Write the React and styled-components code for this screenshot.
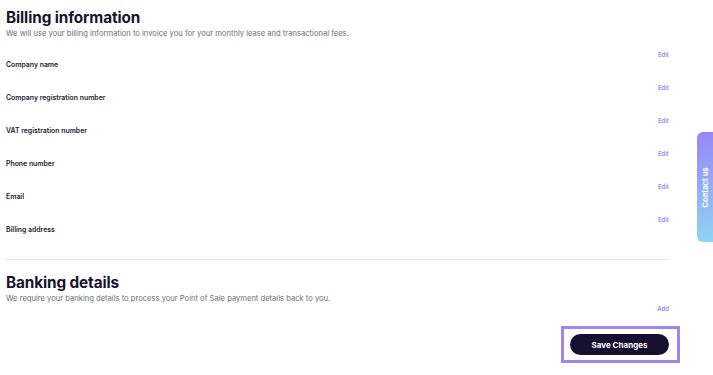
import React from "react";
import styled, { createGlobalStyle } from "styled-components";

const Global = createGlobalStyle`
  html, body { margin: 0; padding: 0; background: #ffffff; }
  body { font-family: Inter, "Noto Sans", "Liberation Sans", sans-serif; }
  * { box-sizing: border-box; }
`;

const Page = styled.div`
  width: 713px;
  height: 375px;
  overflow: hidden;
  padding: 8px 44px 0 6px;
  display: flex;
  flex-direction: column;
`;

const Title = styled.h1`
  margin: 0;
  font-size: 15.3px;
  line-height: 20px;
  font-weight: 700;
  color: #16132f;
  letter-spacing: -0.1px;
`;

const Subtitle = styled.p`
  margin: 0;
  font-size: 7.6px;
  line-height: 11px;
  color: #6e6c7c;
`;

const Rows = styled.div`
  margin-top: 12px;
  display: flex;
  flex-direction: column;
`;

const Row = styled.div`
  height: 33px;
  display: flex;
  flex-direction: column;
`;

const ActionLink = styled.a`
  align-self: flex-end;
  font-size: 6px;
  line-height: 8px;
  font-weight: 600;
  color: #9d88f4;
  cursor: pointer;
`;

const Label = styled.div`
  margin-top: 1px;
  font-size: 6.9px;
  line-height: 10px;
  font-weight: 600;
  color: #23212f;
`;

const Divider = styled.hr`
  margin: 10px 0 13px;
  border: 0;
  border-top: 1px solid #d8ecf3;
  height: 0;
`;

const SectionTitle = styled(Title)``;

const AddRow = styled.div`
  margin-top: 1px;
  display: flex;
  justify-content: flex-end;
`;

const Focus = styled.div`
  align-self: flex-end;
  margin-top: 13px;
  margin-right: -11px;
  border: 3px solid #9c86f2;
  padding: 5px 8px 5px 6px;
  display: flex;
`;

const SaveButton = styled.button`
  width: 99px;
  height: 21px;
  border: 0;
  border-radius: 11px;
  background: #15102f;
  color: #ffffff;
  font-family: inherit;
  font-size: 8px;
  font-weight: 700;
  cursor: pointer;
`;

const ContactTab = styled.div`
  position: fixed;
  right: 0;
  top: 132px;
  width: 16px;
  height: 110px;
  border-radius: 6px 0 0 6px;
  background: linear-gradient(180deg, #9687f6 0%, #92aef4 50%, #8fd3f3 100%);
  display: flex;
  align-items: center;
  justify-content: center;
`;

const ContactText = styled.span`
  transform: rotate(-90deg);
  white-space: nowrap;
  color: #ffffff;
  font-size: 7.6px;
  font-weight: 700;
`;

const fields = [
  "Company name",
  "Company registration number",
  "VAT registration number",
  "Phone number",
  "Email",
  "Billing address",
];

export default function App() {
  return (
    <>
      <Global />
      <Page>
        <Title>Billing information</Title>
        <Subtitle>
          We will use your billing information to invoice you for your monthly lease and transactional fees.
        </Subtitle>
        <Rows>
          {fields.map((f) => (
            <Row key={f}>
              <ActionLink>Edit</ActionLink>
              <Label>{f}</Label>
            </Row>
          ))}
        </Rows>
        <Divider />
        <SectionTitle>Banking details</SectionTitle>
        <Subtitle>
          We require your banking details to process your Point of Sale payment details back to you.
        </Subtitle>
        <AddRow>
          <ActionLink>Add</ActionLink>
        </AddRow>
        <Focus>
          <SaveButton>Save Changes</SaveButton>
        </Focus>
      </Page>
      <ContactTab>
        <ContactText>Contact us</ContactText>
      </ContactTab>
    </>
  );
}
